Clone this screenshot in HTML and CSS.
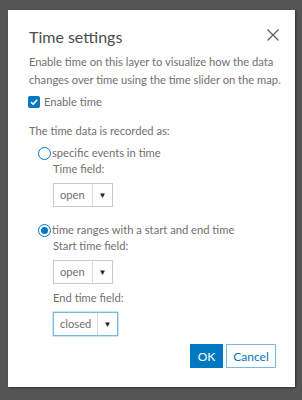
FILE: index.html
```html
<!DOCTYPE html>
<html lang="en">
<head>
    <meta charset="UTF-8">
    <meta name="viewport" content="width=device-width, initial-scale=1.0">
    <title>Time settings</title>
    <link rel="stylesheet" href="styles.css">
</head>
<body>
    <div class="dialog">
        <div class="dialog-header">
            <h2 class="dialog-title">Time settings</h2>
            <button class="close-btn" aria-label="Close">
                <svg width="12" height="12" viewBox="0 0 12 12">
                    <path d="M0.5 0.5 L11.5 11.5 M11.5 0.5 L0.5 11.5" stroke="#555" stroke-width="1.1" fill="none"/>
                </svg>
            </button>
        </div>

        <p class="intro">Enable time on this layer to visualize how the data changes over time using the time slider on the map.</p>

        <label class="check-row">
            <span class="checkbox">
                <svg width="10" height="10" viewBox="0 0 10 10">
                    <path d="M2 5.2 L4.2 7.2 L8.2 2.8" stroke="#fff" stroke-width="1.6" fill="none"/>
                </svg>
            </span>
            Enable time
        </label>

        <p class="label">The time data is recorded as:</p>

        <div class="options">
            <label class="radio-row">
                <span class="radio"></span>
                specific events in time
            </label>
            <div class="field-group">
                <div class="field-label">Time field:</div>
                <div class="select">
                    <span class="select-value">open</span>
                    <span class="select-arrow">&#9660;</span>
                </div>
            </div>

            <label class="radio-row">
                <span class="radio checked"></span>
                time ranges with a start and end time
            </label>
            <div class="field-group">
                <div class="field-label">Start time field:</div>
                <div class="select">
                    <span class="select-value">open</span>
                    <span class="select-arrow">&#9660;</span>
                </div>
                <div class="field-label">End time field:</div>
                <div class="select focused">
                    <span class="select-value">closed</span>
                    <span class="select-arrow">&#9660;</span>
                </div>
            </div>
        </div>

        <div class="actions">
            <button class="btn btn-primary">OK</button>
            <button class="btn btn-secondary">Cancel</button>
        </div>
    </div>
</body>
</html>
```

FILE: styles.css
```css
* {
    margin: 0;
    padding: 0;
    box-sizing: border-box;
    font-family: 'Lato', 'Open Sans', sans-serif;
}

:root {
    --blue: #0079c1;
    --text: #707070;
    --title: #4c4c4c;
    --border: #cacaca;
}

body {
    background: #555555;
    width: 302px;
    height: 400px;
    padding: 10px 7px 13px 8px;
}

.dialog {
    background: #ffffff;
    width: 287px;
    height: 377px;
    padding: 15px 19px 0 21px;
    box-shadow: 1px 1px 2px rgba(0, 0, 0, 0.45);
    color: var(--text);
    font-size: 11.2px;
}

.dialog-header {
    display: flex;
    justify-content: space-between;
    align-items: flex-start;
}

.dialog-title {
    font-size: 16px;
    font-weight: 400;
    color: var(--title);
    line-height: 24px;
}

.close-btn {
    background: none;
    border: none;
    margin-top: 3px;
    margin-right: -3px;
    width: 12px;
    height: 12px;
}

.intro {
    margin-top: 4px;
    margin-right: -14px;
    line-height: 18px;
}

.check-row {
    display: flex;
    align-items: center;
    gap: 4px;
    margin-top: 5px;
    line-height: 16px;
}

.checkbox {
    width: 12px;
    height: 12px;
    background: var(--blue);
    border-radius: 2px;
    display: flex;
    align-items: center;
    justify-content: center;
    margin-left: -1px;
}

.label {
    margin-top: 13px;
    line-height: 16px;
}

.options {
    padding-left: 9px;
}

.radio-row {
    display: flex;
    align-items: center;
    gap: 1px;
    margin-top: 6px;
    line-height: 16px;
}

.field-group + .radio-row {
    margin-top: 15px;
}

.radio {
    width: 13px;
    height: 13px;
    border: 1.3px solid var(--blue);
    border-radius: 50%;
    display: flex;
    align-items: center;
    justify-content: center;
}

.radio.checked::after {
    content: "";
    width: 7px;
    height: 7px;
    background: var(--blue);
    border-radius: 50%;
}

.field-group {
    padding-left: 15px;
}

.field-label {
    line-height: 16px;
}

.select + .field-label {
    margin-top: 6px;
}

.select {
    display: flex;
    width: 60px;
    height: 24px;
    border: 1px solid var(--border);
    margin-top: 6px;
}

.select-value {
    flex: 1;
    padding-left: 6px;
    line-height: 22px;
}

.select-arrow {
    width: 20px;
    border-left: 1px solid #dcdcdc;
    font-size: 8px;
    color: #222;
    text-align: center;
    line-height: 22px;
}

.select.focused {
    width: 65px;
    border-color: #7ab8e0;
    box-shadow: 0 0 0 0.5px #9ccbe9;
}

.actions {
    display: flex;
    justify-content: flex-end;
    gap: 3px;
    margin-top: 8px;
}

.btn {
    height: 24px;
    font-family: 'Lato', 'Open Sans', sans-serif;
    font-size: 12px;
    cursor: pointer;
}

.btn-primary {
    width: 33px;
    background: var(--blue);
    color: #fff;
    border: 1px solid var(--blue);
}

.btn-secondary {
    width: 50px;
    background: #fff;
    color: var(--blue);
    border: 1px solid #7ab8e0;
}
```
